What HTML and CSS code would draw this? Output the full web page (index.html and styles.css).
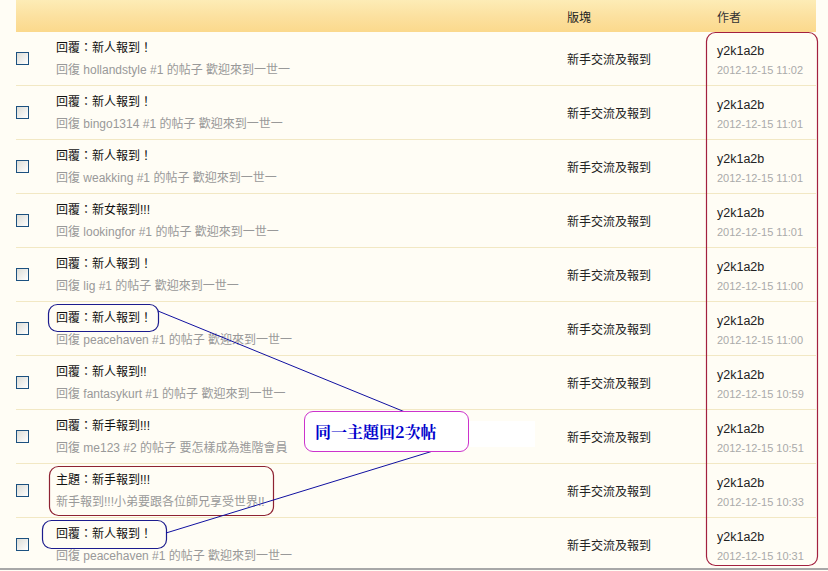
FILE: index.html
```html
<!DOCTYPE html>
<html lang="zh-TW">
<head>
    <meta charset="UTF-8">
    <title>我的帖子</title>
    <link rel="stylesheet" href="styles.css">
</head>
<body>

    <div class="post-table">
        <div class="head-row">
            <div class="col-check"></div>
            <div class="col-subject"></div>
            <div class="col-forum">版塊</div>
            <div class="col-author">作者</div>
        </div>

        <div class="post-row">
            <div class="col-check"><span class="checkbox"></span></div>
            <div class="col-subject">
                <div class="title">回覆：新人報到！</div>
                <div class="summary">回復 hollandstyle #1 的帖子 歡迎來到一世一</div>
            </div>
            <div class="col-forum">新手交流及報到</div>
            <div class="col-author"><div class="name">y2k1a2b</div><div class="date">2012-12-15 11:02</div></div>
        </div>

        <div class="post-row">
            <div class="col-check"><span class="checkbox"></span></div>
            <div class="col-subject">
                <div class="title">回覆：新人報到！</div>
                <div class="summary">回復 bingo1314 #1 的帖子 歡迎來到一世一</div>
            </div>
            <div class="col-forum">新手交流及報到</div>
            <div class="col-author"><div class="name">y2k1a2b</div><div class="date">2012-12-15 11:01</div></div>
        </div>

        <div class="post-row">
            <div class="col-check"><span class="checkbox"></span></div>
            <div class="col-subject">
                <div class="title">回覆：新人報到！</div>
                <div class="summary">回復 weakking #1 的帖子 歡迎來到一世一</div>
            </div>
            <div class="col-forum">新手交流及報到</div>
            <div class="col-author"><div class="name">y2k1a2b</div><div class="date">2012-12-15 11:01</div></div>
        </div>

        <div class="post-row">
            <div class="col-check"><span class="checkbox"></span></div>
            <div class="col-subject">
                <div class="title">回覆：新女報到!!!</div>
                <div class="summary">回復 lookingfor #1 的帖子 歡迎來到一世一</div>
            </div>
            <div class="col-forum">新手交流及報到</div>
            <div class="col-author"><div class="name">y2k1a2b</div><div class="date">2012-12-15 11:01</div></div>
        </div>

        <div class="post-row">
            <div class="col-check"><span class="checkbox"></span></div>
            <div class="col-subject">
                <div class="title">回覆：新人報到！</div>
                <div class="summary">回復 lig #1 的帖子 歡迎來到一世一</div>
            </div>
            <div class="col-forum">新手交流及報到</div>
            <div class="col-author"><div class="name">y2k1a2b</div><div class="date">2012-12-15 11:00</div></div>
        </div>

        <div class="post-row">
            <div class="col-check"><span class="checkbox"></span></div>
            <div class="col-subject">
                <div class="title">回覆：新人報到！</div>
                <div class="summary">回復 peacehaven #1 的帖子 歡迎來到一世一</div>
            </div>
            <div class="col-forum">新手交流及報到</div>
            <div class="col-author"><div class="name">y2k1a2b</div><div class="date">2012-12-15 11:00</div></div>
        </div>

        <div class="post-row">
            <div class="col-check"><span class="checkbox"></span></div>
            <div class="col-subject">
                <div class="title">回覆：新人報到!!</div>
                <div class="summary">回復 fantasykurt #1 的帖子 歡迎來到一世一</div>
            </div>
            <div class="col-forum">新手交流及報到</div>
            <div class="col-author"><div class="name">y2k1a2b</div><div class="date">2012-12-15 10:59</div></div>
        </div>

        <div class="post-row">
            <div class="col-check"><span class="checkbox"></span></div>
            <div class="col-subject">
                <div class="title">回覆：新手報到!!!</div>
                <div class="summary">回復 me123 #2 的帖子 要怎樣成為進階會員</div>
            </div>
            <div class="col-forum">新手交流及報到</div>
            <div class="col-author"><div class="name">y2k1a2b</div><div class="date">2012-12-15 10:51</div></div>
        </div>

        <div class="post-row">
            <div class="col-check"><span class="checkbox"></span></div>
            <div class="col-subject">
                <div class="title">主題：新手報到!!!</div>
                <div class="summary">新手報到!!!小弟要跟各位師兄享受世界!!</div>
            </div>
            <div class="col-forum">新手交流及報到</div>
            <div class="col-author"><div class="name">y2k1a2b</div><div class="date">2012-12-15 10:33</div></div>
        </div>

        <div class="post-row">
            <div class="col-check"><span class="checkbox"></span></div>
            <div class="col-subject">
                <div class="title">回覆：新人報到！</div>
                <div class="summary">回復 peacehaven #1 的帖子 歡迎來到一世一</div>
            </div>
            <div class="col-forum">新手交流及報到</div>
            <div class="col-author"><div class="name">y2k1a2b</div><div class="date">2012-12-15 10:31</div></div>
        </div>
    </div>

    <!-- 標註：圈選與連線 -->
    <svg class="marks" width="828" height="571" viewBox="0 0 828 571">
        <rect x="706.5" y="32.5" width="111" height="533" rx="9" fill="none" stroke="#a3203f" stroke-width="1.2"/>
        <rect x="48.5" y="304.5" width="110" height="27" rx="9" fill="none" stroke="#1c1c8e" stroke-width="1.2"/>
        <rect x="49.5" y="466.5" width="224" height="49" rx="9" fill="none" stroke="#8e2232" stroke-width="1.2"/>
        <rect x="42.5" y="520.5" width="124" height="28" rx="9" fill="none" stroke="#1c1c8e" stroke-width="1.2"/>
        <line x1="158" y1="311" x2="405" y2="412" stroke="#1010a0" stroke-width="1"/>
        <line x1="166" y1="533" x2="433" y2="451" stroke="#1010a0" stroke-width="1"/>
        <rect x="468" y="421" width="67" height="26" fill="#ffffff"/>
        <line x1="0" y1="569" x2="828" y2="569" stroke="#a8a8a8" stroke-width="2"/>
    </svg>
    <div class="callout">同一主題回2次帖</div>

</body>
</html>
```

FILE: styles.css
```css
body {
    margin: 0;
    background-color: #fffdf5;
    font-family: "Liberation Sans", "Noto Sans CJK TC", sans-serif;
    font-size: 12px;
    color: #000;
    overflow: hidden;
}

.post-table {
    margin-left: 16px;
    width: 800px;
}

.head-row,
.post-row {
    display: grid;
    grid-template-columns: 40px 511px 150px 99px;
}

.head-row {
    height: 32px;
    align-items: center;
    background: linear-gradient(#fdecb6, #fce1a0 50%, #fbd98c);
    color: #333;
}

.post-row {
    height: 53px;
    border-bottom: 1px solid #f2e8c4;
    align-items: center;
}

.checkbox {
    display: block;
    width: 11px;
    height: 11px;
    border: 1px solid #1c5180;
    background: linear-gradient(135deg, #dcdcd6, #ffffff);
}

.post-row .col-subject {
    display: flex;
    flex-direction: column;
    gap: 2px;
    padding-top: 1px;
}

.title,
.summary {
    line-height: 20px;
}

.title {
    color: #111;
}

.summary {
    color: #999;
}

.col-forum {
    color: #222;
}

.post-row .col-author {
    padding-top: 4px;
}

.name {
    font-size: 12.5px;
    line-height: 19px;
    color: #222;
}

.date {
    line-height: 19px;
    font-size: 11px;
    color: #aaa;
}

/* 標註 */
.marks {
    position: absolute;
    top: 0;
    left: 0;
    pointer-events: none;
}

.callout {
    position: absolute;
    left: 304px;
    top: 411px;
    box-sizing: border-box;
    width: 165px;
    height: 41px;
    padding-left: 10px;
    border: 1px solid #cc33cc;
    border-radius: 9px;
    background: #fff;
    line-height: 39px;
    font-family: "Noto Serif CJK TC", "Noto Sans CJK TC", serif;
    font-weight: bold;
    font-size: 16px;
    color: #0000cc;
}
```
